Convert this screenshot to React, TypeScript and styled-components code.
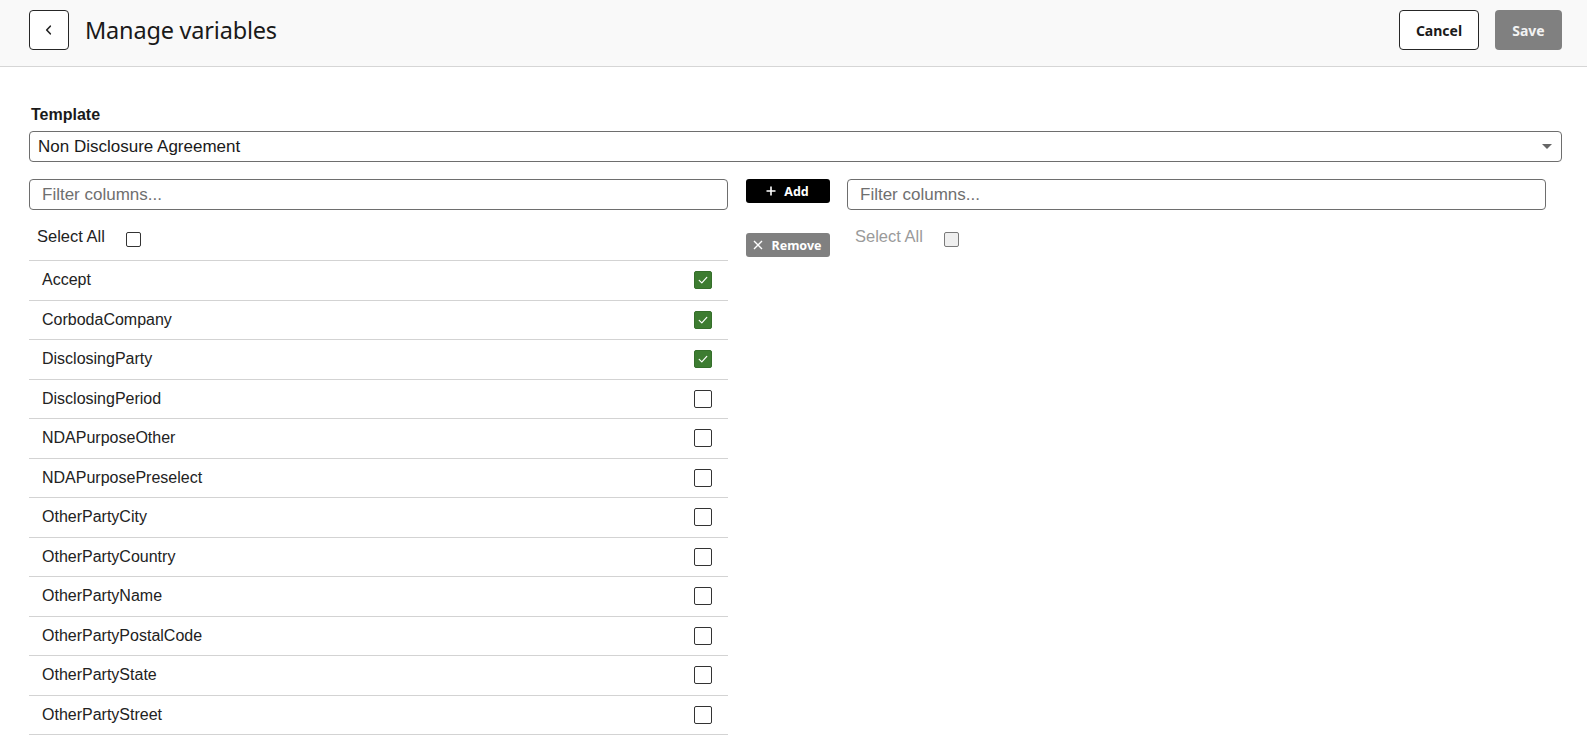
import React, { useState } from 'react'
import styled, { createGlobalStyle } from 'styled-components'

const GlobalStyle = createGlobalStyle`
  body {
    margin: 0;
    background: #fff;
    font-family: "Liberation Sans", Arial, sans-serif;
    color: #222;
  }
  * { box-sizing: border-box; }
`

const variables = [
  'Accept',
  'CorbodaCompany',
  'DisclosingParty',
  'DisclosingPeriod',
  'NDAPurposeOther',
  'NDAPurposePreselect',
  'OtherPartyCity',
  'OtherPartyCountry',
  'OtherPartyName',
  'OtherPartyPostalCode',
  'OtherPartyState',
  'OtherPartyStreet',
]

const CheckIcon = () => (
  <svg width="12" height="12" viewBox="0 0 12 12" fill="none">
    <path d="M2.2 6.4 L4.8 8.9 L9.8 3.4" stroke="#fff" strokeWidth="1.2" strokeLinecap="round" strokeLinejoin="round" />
  </svg>
)

const App: React.FC = () => {
  const [checked, setChecked] = useState<string[]>(['Accept', 'CorbodaCompany', 'DisclosingParty'])

  const toggle = (name: string) => {
    setChecked((prev) => (prev.includes(name) ? prev.filter((n) => n !== name) : [...prev, name]))
  }

  return (
    <>
      <GlobalStyle />
      <Header>
        <HeaderLeft>
          <BackButton aria-label="Back">
            <svg width="12" height="12" viewBox="0 0 12 12" fill="none">
              <path d="M7.3 2.2 L3.7 6 L7.3 9.8" stroke="#222" strokeWidth="1.6" strokeLinecap="round" strokeLinejoin="round" />
            </svg>
          </BackButton>
          <Title>Manage variables</Title>
        </HeaderLeft>
        <HeaderActions>
          <CancelButton>Cancel</CancelButton>
          <SaveButton>Save</SaveButton>
        </HeaderActions>
      </Header>

      <Content>
        <Label>Template</Label>
        <SelectBox>
          <span>Non Disclosure Agreement</span>
          <Caret />
        </SelectBox>

        <Columns>
          <Column>
            <FilterInput placeholder="Filter columns..." />
            <SelectAllRow>
              <SelectAllText>Select All</SelectAllText>
              <SmallBox />
            </SelectAllRow>
            <List>
              {variables.map((v) => {
                const on = checked.includes(v)
                return (
                  <Row key={v} onClick={() => toggle(v)}>
                    <span>{v}</span>
                    <Box $checked={on}>{on && <CheckIcon />}</Box>
                  </Row>
                )
              })}
            </List>
          </Column>

          <Middle>
            <ActionButton $variant="add">
              <svg width="10" height="10" viewBox="0 0 10 10">
                <path d="M5 0.5 V9.5 M0.5 5 H9.5" stroke="#fff" strokeWidth="1.6" />
              </svg>
              Add
            </ActionButton>
            <ActionButton $variant="remove">
              <svg width="10" height="10" viewBox="0 0 10 10">
                <path d="M1 1 L9 9 M9 1 L1 9" stroke="#fff" strokeWidth="1.4" />
              </svg>
              Remove
            </ActionButton>
          </Middle>

          <Column>
            <FilterInput placeholder="Filter columns..." />
            <SelectAllRow>
              <SelectAllText $muted>Select All</SelectAllText>
              <SmallBox $disabled />
            </SelectAllRow>
          </Column>
        </Columns>
      </Content>
    </>
  )
}

export default App

const Header = styled.header`
  height: 67px;
  background: #f9f9f9;
  border-bottom: 1px solid #d6d6d6;
  display: flex;
  align-items: flex-start;
  justify-content: space-between;
  padding: 10px 25px 0 29px;
  font-family: "Noto Sans", sans-serif;
`

const HeaderLeft = styled.div`
  display: flex;
  align-items: center;
  gap: 16px;
  height: 40px;
`

const BackButton = styled.button`
  width: 40px;
  height: 40px;
  border: 1px solid #262626;
  border-radius: 4px;
  background: #fff;
  display: flex;
  align-items: center;
  justify-content: center;
  padding: 0;
  cursor: pointer;
`

const Title = styled.h1`
  margin: 0;
  font-size: 23.5px;
  font-weight: 400;
  color: #1a1a1a;
  letter-spacing: -0.2px;
`

const HeaderActions = styled.div`
  display: flex;
  gap: 16px;
`

const BaseButton = styled.button`
  height: 40px;
  border-radius: 4px;
  font-family: "Noto Sans", sans-serif;
  font-size: 14px;
  font-weight: 700;
  cursor: pointer;
`

const CancelButton = styled(BaseButton)`
  width: 80px;
  background: #fff;
  border: 1px solid #262626;
  color: #1a1a1a;
`

const SaveButton = styled(BaseButton)`
  width: 67px;
  background: #808080;
  border: none;
  color: #f2f2f2;
`

const Content = styled.main`
  padding: 39px 25px 0 29px;
`

const Label = styled.div`
  font-size: 16px;
  line-height: 18px;
  font-weight: 700;
  color: #1a1a1a;
  padding-left: 2px;
  margin-bottom: 7px;
`

const SelectBox = styled.div`
  height: 31px;
  border: 1px solid #6e6e6e;
  border-radius: 4px;
  display: flex;
  align-items: center;
  justify-content: space-between;
  padding: 0 9px 0 8px;
  font-size: 17px;
  color: #1a1a1a;
`

const Caret = styled.span`
  width: 0;
  height: 0;
  border-left: 5px solid transparent;
  border-right: 5px solid transparent;
  border-top: 5px solid #666;
`

const Columns = styled.div`
  display: grid;
  grid-template-columns: 1fr 84px 1fr;
  column-gap: 17.5px;
  margin-top: 17px;
  padding-right: 16px;
`

const Column = styled.div`
  display: flex;
  flex-direction: column;
`

const FilterInput = styled.input`
  height: 31px;
  border: 1px solid #6e6e6e;
  border-radius: 4px;
  padding: 0 12px;
  font-family: "Liberation Sans", Arial, sans-serif;
  font-size: 17px;
  color: #222;
  outline: none;

  &::placeholder {
    color: #6f6f6f;
  }
`

const SelectAllRow = styled.div`
  display: flex;
  align-items: flex-start;
  gap: 21px;
  height: 50px;
  padding: 17px 0 0 8px;
`

const SelectAllText = styled.span<{ $muted?: boolean }>`
  font-size: 16.5px;
  line-height: 19px;
  color: ${({ $muted }) => ($muted ? '#9a9a9a' : '#222')};
`

const SmallBox = styled.span<{ $disabled?: boolean }>`
  width: 15px;
  height: 15px;
  margin-top: 5px;
  border: 1px solid ${({ $disabled }) => ($disabled ? '#7a7a7a' : '#333')};
  border-radius: 2px;
  background: ${({ $disabled }) => ($disabled ? '#efefef' : '#fff')};
`

const List = styled.div`
  border-top: 1px solid #d3d3d3;
`

const Row = styled.div`
  height: 39.5px;
  display: flex;
  align-items: center;
  justify-content: space-between;
  padding: 0 16px 0 13px;
  border-bottom: 1px solid #d3d3d3;
  font-size: 16px;
  color: #222;
  cursor: pointer;
`

const Box = styled.span<{ $checked: boolean }>`
  width: 18px;
  height: 18px;
  border-radius: 2px;
  display: flex;
  align-items: center;
  justify-content: center;
  background: ${({ $checked }) => ($checked ? '#3d7c31' : '#fff')};
  border: ${({ $checked }) => ($checked ? '1px solid #356f2b' : '1.5px solid #333')};
`

const Middle = styled.div`
  display: flex;
  flex-direction: column;
  gap: 30px;
`

const ActionButton = styled.button<{ $variant: 'add' | 'remove' }>`
  height: 24px;
  width: 84px;
  border: none;
  border-radius: 3px;
  background: ${({ $variant }) => ($variant === 'add' ? '#000' : '#808080')};
  color: #fff;
  font-family: "Noto Sans", sans-serif;
  font-size: 12.5px;
  font-weight: 700;
  display: flex;
  align-items: center;
  justify-content: center;
  gap: 8px;
  padding: 0;
  cursor: pointer;
`
